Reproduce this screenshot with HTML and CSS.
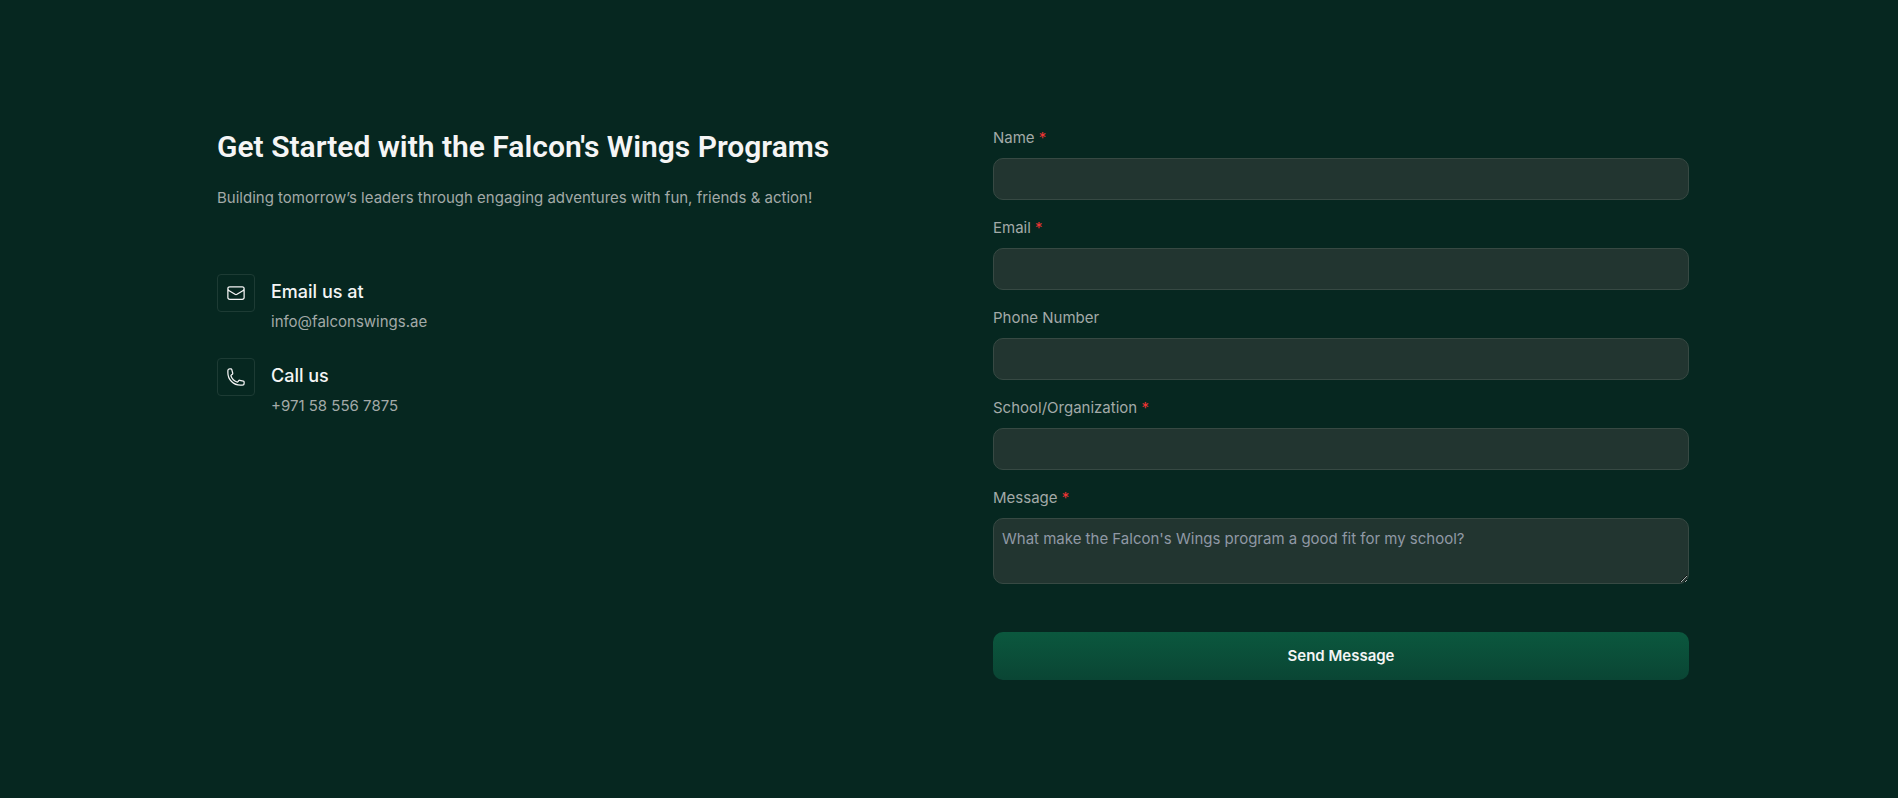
FILE: index.html
```html
<!DOCTYPE html>
<html lang="en">
<head>
<meta charset="utf-8">
<meta name="viewport" content="width=device-width, initial-scale=1">
<title>Falcon's Wings – Contact</title>
<link rel="stylesheet" href="styles.css">
</head>
<body>
<main class="contact">
  <section class="intro">
    <h1 class="intro-title">Get Started with the Falcon's Wings Programs</h1>
    <p class="intro-text">Building tomorrow’s leaders through engaging adventures with fun, friends &amp; action!</p>
    <ul class="channels">
      <li class="channel">
        <span class="channel-icon">
          <svg viewBox="0 0 24 24" aria-hidden="true"><path d="M21.75 6.75v10.5a2.25 2.25 0 0 1-2.25 2.25h-15a2.25 2.25 0 0 1-2.25-2.25V6.75m19.5 0A2.25 2.25 0 0 0 19.5 4.5h-15a2.25 2.25 0 0 0-2.25 2.25m19.5 0v.243a2.25 2.25 0 0 1-1.07 1.916l-7.5 4.615a2.25 2.25 0 0 1-2.36 0L3.32 8.91a2.25 2.25 0 0 1-1.07-1.916V6.75"/></svg>
        </span>
        <div>
          <h2 class="channel-title">Email us at</h2>
          <a class="channel-link" href="mailto:info@falconswings.ae">info@falconswings.ae</a>
        </div>
      </li>
      <li class="channel">
        <span class="channel-icon">
          <svg viewBox="0 0 24 24" aria-hidden="true"><path d="M2.25 6.75c0 8.284 6.716 15 15 15h2.25a2.25 2.25 0 0 0 2.25-2.25v-1.372c0-.516-.351-.966-.852-1.091l-4.423-1.106c-.44-.11-.902.055-1.173.417l-.97 1.293c-.282.376-.769.542-1.21.38a12.035 12.035 0 0 1-7.143-7.143c-.162-.441.004-.928.38-1.21l1.293-.97c.363-.271.527-.734.417-1.173L6.963 3.102a1.125 1.125 0 0 0-1.091-.852H4.5A2.25 2.25 0 0 0 2.25 4.5v2.25Z"/></svg>
        </span>
        <div>
          <h2 class="channel-title">Call us</h2>
          <a class="channel-link" href="tel:+971585567875">+971 58 556 7875</a>
        </div>
      </li>
    </ul>
  </section>
  <form class="form">
    <div class="field">
      <label for="name">Name <span class="required">*</span></label>
      <input class="control" id="name" type="text">
    </div>
    <div class="field">
      <label for="email">Email <span class="required">*</span></label>
      <input class="control" id="email" type="email">
    </div>
    <div class="field">
      <label for="phone">Phone Number</label>
      <input class="control" id="phone" type="tel">
    </div>
    <div class="field">
      <label for="school">School/Organization <span class="required">*</span></label>
      <input class="control" id="school" type="text">
    </div>
    <div class="field">
      <label for="message">Message <span class="required">*</span></label>
      <textarea class="control" id="message" rows="2" placeholder="What make the Falcon's Wings program a good fit for my school?"></textarea>
    </div>
    <button class="submit" type="submit">Send Message</button>
  </form>
</main>
</body>
</html>
```
FILE: styles.css
```css
*, *::before, *::after { box-sizing: border-box; }

body {
  margin: 0;
  padding: 126px 32px 112px 40px;
  background: #062720;
  color: #a3aaa8;
  font-family: Inter, "Liberation Sans", sans-serif;
  font-size: 15px;
  line-height: 24px;
}

h1, h2, p, ul { margin: 0; padding: 0; }

.contact {
  display: grid;
  grid-template-columns: repeat(2, minmax(0, 1fr));
  gap: 80px;
  max-width: 1472px;
  margin: 0 auto;
}

.intro-title {
  color: #f5f5f5;
  font-family: Roboto, "Liberation Sans", sans-serif;
  font-size: 30px;
  font-weight: 600;
  line-height: 42px;
}

.intro-text { margin-top: 18px; }

.channels {
  display: grid;
  gap: 24px;
  margin-top: 64px;
  list-style: none;
}

.channel {
  display: flex;
  align-items: flex-start;
  gap: 16px;
}

.channel-icon {
  display: grid;
  place-items: center;
  width: 38px;
  height: 38px;
  border: 1px solid #1d3b34;
  border-radius: 4px;
}

.channel-icon svg {
  width: 20px;
  height: 20px;
  fill: none;
  stroke: #f5f5f5;
  stroke-width: 1.5;
  stroke-linecap: round;
  stroke-linejoin: round;
}

.channel-title {
  padding-top: 4px;
  color: #f5f5f5;
  font-size: 18px;
  font-weight: 500;
  line-height: 28px;
}

.channel-link {
  display: block;
  margin-top: 4px;
  color: inherit;
  text-decoration: none;
}

.form { display: grid; gap: 16px; }

.field { display: grid; gap: 8px; }

.required { color: #ef3434; }

.control {
  display: block;
  width: 100%;
  min-height: 42px;
  padding: 8px;
  border: 1px solid #374943;
  border-radius: 10px;
  background: #223530;
  color: #f5f5f5;
  font: inherit;
}

textarea.control { resize: vertical; }

.control::placeholder { color: #9099a5; }

.submit {
  height: 48px;
  margin-top: 32px;
  border: 0;
  border-radius: 10px;
  background: linear-gradient(#0b583e, #0a4534);
  color: #f5f5f5;
  font: inherit;
  font-weight: 600;
}

@media (max-width: 900px) {
  .contact { grid-template-columns: minmax(0, 1fr); }
}
```
